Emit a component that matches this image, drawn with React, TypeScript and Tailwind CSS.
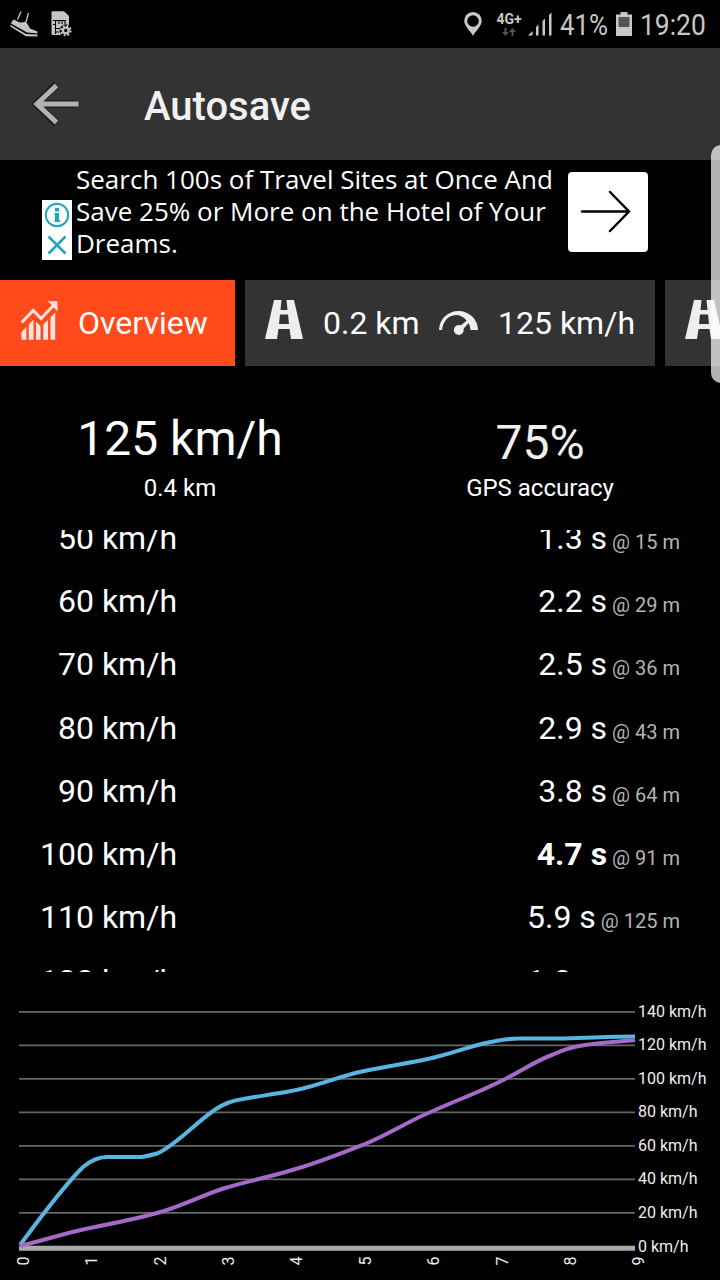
import type { ReactNode } from 'react'

const splits = [
  { speed: '50 km/h', time: '1.3 s', distance: '@ 15 m' },
  { speed: '60 km/h', time: '2.2 s', distance: '@ 29 m' },
  { speed: '70 km/h', time: '2.5 s', distance: '@ 36 m' },
  { speed: '80 km/h', time: '2.9 s', distance: '@ 43 m' },
  { speed: '90 km/h', time: '3.8 s', distance: '@ 64 m' },
  { speed: '100 km/h', time: '4.7 s', distance: '@ 91 m', best: true },
  { speed: '110 km/h', time: '5.9 s', distance: '@ 125 m' },
  { speed: '120 km/h', time: '1.8 s', distance: '@ 188 m' }
]

const gridSpeeds = [140, 120, 100, 80, 60, 40, 20, 0]
const seconds = [0, 1, 2, 3, 4, 5, 6, 7, 8, 9]

function ShoeIcon() {
  return (
    <svg className="w-[28px] h-[26px]" viewBox="0 0 28 26" fill="#c4c4c4">
      <path d="M11 .5L7.5 8.5M18.5 2L16 11" stroke="#c4c4c4" strokeWidth="1.3" fill="none" />
      <path d="M4 8.500L7.500 10.500Q11 12.500 15.500 10.500L17.500 13L20 17.500L27.500 20.500V22.500L17 21.500L1 12.500Q1.500 10 4 8.500Z" />
      <path d="M.3 13.8L16 22.9L27.500 23.6V25.4L16 25.200L.3 15.600Z" />
    </svg>
  )
}

function SimIcon() {
  return (
    <svg className="w-[21px] h-[26px]" viewBox="0 0 21 26">
      <path d="M1.5 .3H13L18 5V24H1.5Q.5 24 .5 23V1.3Q.5 .3 1.5 .3Z" fill="#c4c4c4" />
      <path d="M2 9.5H15M4.5 9.5V23M8 9.5V13M11 9.5V13M14 9.5V13M2 13.5H4.5M5 17.5H9.5M5 21H8" stroke="#000" strokeWidth="1.1" fill="none" />
      <circle cx="14.8" cy="19.5" r="6.3" fill="#000" />
      <circle cx="14.8" cy="19.5" r="4.8" fill="none" stroke="#c4c4c4" strokeWidth="2" strokeDasharray="1.9 1.87" />
      <circle cx="14.8" cy="19.5" r="2.9" fill="none" stroke="#c4c4c4" strokeWidth="2.4" />
    </svg>
  )
}

function RoadIcon() {
  return (
    <svg className="w-[38px] h-[39px] shrink-0" viewBox="0 0 38 39" fill="#eee">
      <path fillRule="evenodd" d="M9 0H16.5L15.5 10H22.5L21.5 0H29L38 39H26L24.5 29H13.5L12 39H0ZM15 14.5H23L24 24H14Z" />
    </svg>
  )
}

function GaugeIcon() {
  return (
    <svg className="w-[39px] h-[26px] shrink-0" viewBox="0 0 39 26" fill="#eee">
      <path d="M0 20A19.5 19 0 0 1 39 20H31.5Q31 14 27.5 10.5Q23 5 17 5Q5 6 3 20Z" />
      <path d="M17.5 19L29 9.5L31 11.5L21.5 22Z" />
      <circle cx="19.8" cy="20" r="4.9" />
    </svg>
  )
}

function StatsIcon() {
  return (
    <svg className="w-[37px] h-[40px] shrink-0" viewBox="0 0 37 40" fill="#fbe3dd">
      <path d="M.7 21.5L12.3 9.5L20 17.5L32 5" stroke="#fbe3dd" strokeWidth="3" fill="none" />
      <path d="M27 .2H36.5V10.5Z" />
      <path d="M.5 38.7V31L5.3 26V38.7ZM7.8 38.7V23.5L12.5 18.5V38.7ZM15 38.7V20.5L19.5 25V38.7ZM22.3 38.7V23.5L27 19V38.7ZM29.5 38.7V16.5L34.2 11.5V38.7Z" />
    </svg>
  )
}

function StatusBar() {
  return (
    <header className="h-12 flex items-center text-[#c8c8c8]">
      <div className="w-[41px] pl-[10px]"><ShoeIcon /></div>
      <div className="pl-[10px]"><SimIcon /></div>
      <div className="ml-auto mr-[8px] flex items-center">
        <svg className="w-[18px] h-[24px]" viewBox="0 0 18 24" fill="#c8c8c8">
          <path fillRule="evenodd" d="M9 0A8.8 8.8 0 0 1 17.8 8.8C17.8 14 11 20 9 24C7 20 .2 14 .2 8.8A8.8 8.8 0 0 1 9 0ZM9 3.2A5.8 5.8 0 1 0 9 14.8A5.8 5.8 0 1 0 9 3.2Z" />
        </svg>
        <div className="w-[26px] ml-[14px] flex flex-col items-center">
          <span className="text-[14px] leading-[14px] font-bold">4G+</span>
          <svg className="w-[14px] h-[8px] mt-[2px]" viewBox="0 0 14 8" fill="#555">
            <path d="M2.5 0H4.5V4H7L3.5 8L0 4H2.5ZM9.500 8H11.500V4H14L10.500 0L7 4H9.500Z" />
          </svg>
        </div>
        <svg className="w-[24px] h-[24px] ml-[6px]" viewBox="0 0 24 24" fill="#c8c8c8">
          <path d="M0 23.500L4.500 19V23.500ZM8 23.500V15L10.500 12.500V23.500ZM14.500 23.500V9L17 6.500V23.500ZM21 23.500V3L23.500 .5V23.500Z" />
        </svg>
        <div className="w-[48px] ml-[8px]">
          <span className="block text-[30px] leading-[48px] origin-left scale-x-[0.86] pt-px">41%</span>
        </div>
        <svg className="w-[16px] h-[24px] ml-[8px]" viewBox="0 0 16 24">
          <path d="M4.500 0H11.500V2.500H16V24H0V2.500H4.500Z" fill="#c8c8c8" />
          <path d="M2.500 5H13.500V15H2.500Z" fill="#555" />
        </svg>
        <div className="w-[80px] pl-[8px]">
          <span className="block text-[30px] leading-[48px] origin-left scale-x-[0.88] pt-px">19:20</span>
        </div>
      </div>
    </header>
  )
}

function Tab({ active, children }: { active?: boolean; children: ReactNode }) {
  return (
    <div className={`h-[86px] shrink-0 flex items-center text-[32px] text-white ${active ? 'bg-[#ff4a1c]' : 'bg-[#333]'}`}>
      {children}
    </div>
  )
}

function SpeedChart() {
  return (
    <svg className="block w-[720px] h-[308px]" viewBox="0 972 720 308" fontSize="16" fill="#eee">
      {gridSpeeds.map((speed) => (
        <g key={speed}>
          {speed > 0 && (
            <path d={`M19 ${1246.3 - speed * 1.675}H635`} stroke="#666" strokeWidth="1.8" />
          )}
          <text x="638" y={1251.6 - speed * 1.679}>{speed} km/h</text>
        </g>
      ))}
      <path d="M19 1248.300H635" stroke="#aaa" strokeWidth="5" />
      <path
        d="M20 1245C35 1225 60 1190 83 1167Q95 1157 107 1157H142Q150 1155.500 157 1153.500C175 1146 195 1123 216 1109Q228 1101 243 1099C260 1096 275 1094 291 1091C315 1087 340 1076 362 1071.500C388 1066 410 1063 430 1058.500C455 1053 475 1044 496 1041Q508 1038.500 520 1038.500H565C590 1038 610 1036.500 635 1036.500"
        fill="none"
        stroke="#5ab4e0"
        strokeWidth="4"
      />
      <path
        d="M20 1246C45 1240 65 1233 90 1228C115 1223 135 1219 157 1213C180 1207 200 1196 225 1188C248 1181 270 1177 294 1169.500C318 1163 340 1154 365 1144C390 1134 410 1120 433 1111C457 1100 480 1092 501 1081C518 1073 535 1061 553 1054.500Q568 1047.500 585 1045C605 1042 617 1042 635 1040"
        fill="none"
        stroke="#a569c8"
        strokeWidth="4"
      />
      {seconds.map((s) => (
        <text key={s} transform={`translate(${28.7 + s * 68.4} 1261) rotate(-90)`} textAnchor="middle">
          {s}
        </text>
      ))}
    </svg>
  )
}

export default function App() {
  return (
    <div className="relative w-[720px] h-[1280px] overflow-hidden bg-black text-white font-['Roboto',sans-serif]">
      <StatusBar />

      {/* App bar */}
      <div className="h-[112px] bg-[#333] flex items-center">
        <svg className="w-[50px] h-[48px] ml-[31px]" viewBox="0 0 50 48" fill="none">
          <path d="M25.500 4.500L5.500 24L25.500 43.500M5.500 24H47.500" stroke="#222" strokeWidth="8" />
          <path d="M25.500 5.500L6 24L25.500 42.500M6 24H47.500" stroke="#b2b2b2" strokeWidth="5" />
        </svg>
        <h1 className="ml-[63px] mt-[5px] text-[40px] font-medium text-[#f0f0f0]">Autosave</h1>
      </div>

      {/* Ad */}
      <div className="h-[120px] flex pl-[42px]">
        <div className="w-[30px] h-[60px] mt-[40px] bg-white">
          <svg className="w-[30px] h-[60px]" viewBox="0 0 30 60" fill="none" stroke="#22a5bb">
            <circle cx="15" cy="15" r="11.200" strokeWidth="2" />
            <path d="M15 8V11.500M15 13V21.500" strokeWidth="4" />
            <path d="M12.500 14H15M12.500 21H18" strokeWidth="2" />
            <path d="M6.500 36.500L23.500 53.500M23.500 36.500L6.500 53.500" strokeWidth="2.500" />
          </svg>
        </div>
        <p className="w-[492px] pl-[4px] pt-[3px] text-[26px] leading-[32px] whitespace-nowrap font-['Open_Sans',sans-serif]">
          Search 100s of Travel Sites at Once And
          <br />
          Save 25% or More on the Hotel of Your
          <br />
          Dreams.
        </p>
        <div className="w-[80px] h-[80px] ml-[4px] mt-[12px] bg-white rounded-[4px]">
          <svg className="w-[80px] h-[80px]" viewBox="0 0 80 80" fill="none" stroke="#000" strokeWidth="2.500" strokeLinecap="round">
            <path d="M14 39.500H61M42 20L61 39.500L42 59" />
          </svg>
        </div>
      </div>

      {/* Tabs */}
      <nav className="flex gap-[10px] overflow-hidden">
        <Tab active>
          <div className="w-[235px] flex items-center pl-[21px]">
            <div className="pb-[5px]"><StatsIcon /></div>
            <span className="ml-[20px]">Overview</span>
          </div>
        </Tab>
        <Tab>
          <div className="w-[410px] flex items-center pl-[20px]">
            <div className="pb-[7px]"><RoadIcon /></div>
            <span className="ml-[20px] w-[96px] whitespace-nowrap">0.2 km</span>
            <div className="ml-[20px] pb-px"><GaugeIcon /></div>
            <span className="ml-[20px] whitespace-nowrap">125 km/h</span>
          </div>
        </Tab>
        <Tab>
          <div className="w-[410px] flex items-center pl-[20px]">
            <div className="pb-[7px]"><RoadIcon /></div>
          </div>
        </Tab>
      </nav>

      {/* Summary */}
      <section className="h-[164px] grid grid-cols-2 text-center">
        <div className="pt-[45px]">
          <div className="text-[48px] leading-[56px]">125 km/h</div>
          <div className="mt-[7px] text-[24px] leading-[28px]">0.4 km</div>
        </div>
        <div className="pt-[49px]">
          <div className="text-[48px] leading-[56px] text-[#f0f0f0]">75%</div>
          <div className="mt-[3px] text-[24px] leading-[28px]">GPS accuracy</div>
        </div>
      </section>

      {/* Splits, scrolled so that the first and last rows are cut off */}
      <section className="h-[442px] overflow-hidden">
        <div className="-mt-[24px]">
          {splits.map((split) => (
            <div key={split.speed} className="h-[63.3px] flex items-center justify-between pr-[40px] text-[32px]">
              <span className="w-[177px] text-right">{split.speed}</span>
              <span className="flex items-baseline">
                <span className={split.best ? 'font-bold' : ''}>{split.time}</span>
                <span className="ml-[5px] text-[20px] text-[#b4b4b4]">{split.distance}</span>
              </span>
            </div>
          ))}
        </div>
      </section>

      <SpeedChart />

      {/* Edge panel handle */}
      <div className="absolute left-[711px] top-[145px] w-[20px] h-[238px] rounded-[10px] bg-white/70" />
    </div>
  )
}
